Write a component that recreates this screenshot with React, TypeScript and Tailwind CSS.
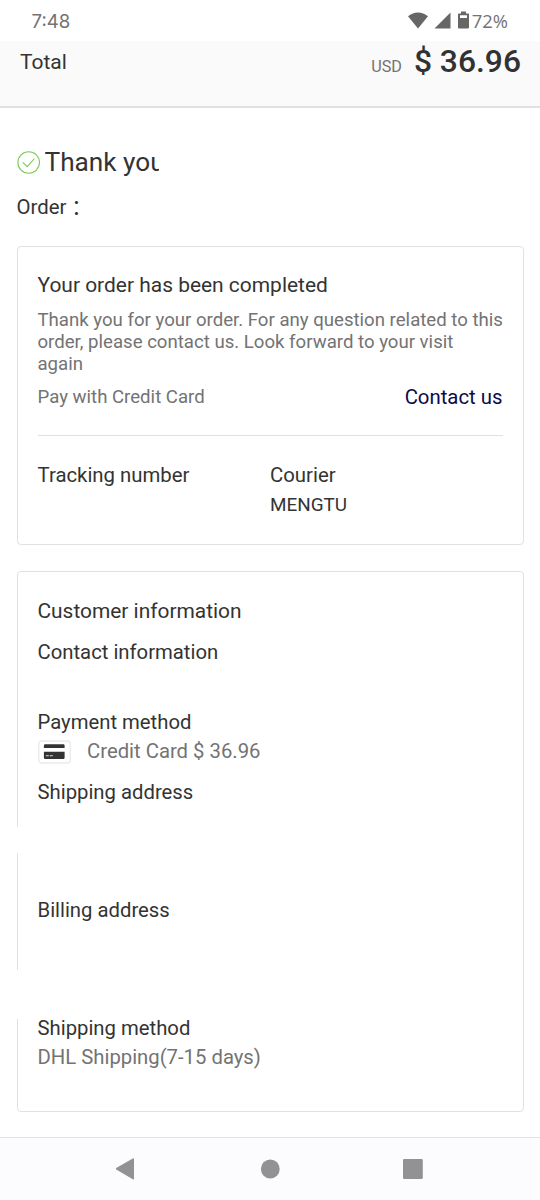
import React from 'react';

const StatusBar = () => {
  return (
    <div className="flex h-[41px] items-center justify-between bg-white pl-[31.5px] pr-8 text-[18px] text-[#737373]">
      <span className="mt-[2px] font-['Inter',sans-serif] text-[18.6px]">7:48</span>
      <div className="flex items-center">
        <svg className="h-[17px] w-5" viewBox="0 0 20 17" fill="#666666">
          <path d="M0 4.2C5.8-.9 14.2-.9 20 4.2L10 16.4Z" />
        </svg>
        <svg className="ml-[6px] h-[17px] w-[17px]" viewBox="0 0 17 17" fill="#666666">
          <path d="M16.5.5V16.5H.5Z" />
        </svg>
        <svg className="ml-[7px] h-[18px] w-[11px]" viewBox="0 0 11 18" fill="#666666">
          <path fillRule="evenodd" d="M3 .5H8V2.5H10Q11 2.5 11 3.5V16.5Q11 17.5 10 17.5H1Q0 17.5 0 16.5V3.5Q0 2.5 1 2.5H3ZM2 4.3V7H9V4.3Z" />
        </svg>
        <span className="ml-[3px] mt-px font-['Open_Sans',sans-serif] text-[18.4px]">72%</span>
      </div>
    </div>
  );
};

const TotalBar = () => {
  return (
    <div className="flex h-[67px] items-start justify-between border-b-2 border-[#e0e0e0] bg-[#fafafa] pl-5 pr-[19px]">
      <span className="mt-[6px] text-[21px] leading-[30px] text-[#333333]">Total</span>
      <div className="flex items-baseline">
        <span className="mr-3 text-[16.2px] text-[#737373]">USD</span>
        <span className="text-[31.8px] font-medium leading-[41px] text-[#323232]">$ 36.96</span>
      </div>
    </div>
  );
};

const OrderCard = () => {
  return (
    <div className="mt-[24px] h-[299px] rounded border border-[#e1e1e1] px-[20px] pt-[23px]">
      <h2 className="text-[20.95px] leading-[30px]">Your order has been completed</h2>
      <p className="mt-[9px] whitespace-nowrap text-[18.63px] leading-[22.2px] text-[#737373]">
        Thank you for your order. For any question related to this
        <br />
        order, please contact us. Look forward to your visit
        <br />
        again
      </p>
      <div className="mt-[6px] flex items-start justify-between border-b border-[#e1e1e1] pb-[23px] leading-[30px]">
        <span className="text-[18.63px] text-[#737373]">Pay with Credit Card</span>
        <span className="text-[20.35px] text-[#0b0b4a]">Contact us</span>
      </div>
      <div className="mt-[24px] grid grid-cols-2 leading-[30px]">
        <span className="text-[20.35px]">Tracking number</span>
        <div className="flex flex-col">
          <span className="text-[20.35px]">Courier</span>
          <span className="text-[18.9px]">MENGTU</span>
        </div>
      </div>
    </div>
  );
};

const CustomerCard = () => {
  return (
    <div className="relative mt-[26px] h-[541px] rounded border border-[#e1e1e1] px-[20px] pt-[24px] text-[20.3px] leading-[30px]">
      {/* breaks in the left border */}
      <div className="absolute -left-px top-[255px] h-[26px] w-px bg-white" />
      <div className="absolute -left-px top-[398px] h-[49px] w-px bg-white" />
      <h2 className="text-[20.9px]">Customer information</h2>
      <h3 className="mt-[11px]">Contact information</h3>
      <h3 className="mt-[40px]">Payment method</h3>
      <div className="-mt-px flex items-center text-[#737373]">
        <svg className="mr-4 mt-[2px] h-6 w-[33.5px]" viewBox="0 0 34 24">
          <rect x=".8" y=".8" width="32" height="22.4" rx="3" fill="#fff" stroke="#ebebeb" strokeWidth="1.4" />
          <path d="M7.3 4.2H25.7Q27 4.2 27 5.5V8H6V5.5Q6 4.2 7.3 4.2ZM6 11.8H27V17.8Q27 19 25.7 19H7.3Q6 19 6 17.8Z" fill="#333" />
          <path d="M8 15.8H11M12 15.8H15" stroke="#ddd" strokeWidth="1.1" />
        </svg>
        <span>Credit Card $ 36.96</span>
      </div>
      <h3 className="mt-[11px]">Shipping address</h3>
      <h3 className="mt-[88px]">Billing address</h3>
      <h3 className="mt-[88px]">Shipping method</h3>
      <p className="-mt-px text-[#737373]">DHL Shipping(7-15 days)</p>
    </div>
  );
};

const NavBar = () => {
  return (
    <div className="mt-[25px] h-[63px] border-t border-[#dce6e1] bg-[#fcfcfe]">
      <svg className="h-[62px] w-full" viewBox="0 0 540 62" fill="#929292">
        <path d="M116.2 30Q115.4 30.7 116.2 31.6L132.8 41.3Q134 41.8 134 40.7V21.1Q134 20 132.8 20.5Z" />
        <circle cx="270.3" cy="31" r="9.4" />
        <rect x="403" y="21" width="19.8" height="20" rx="1.3" />
      </svg>
    </div>
  );
};

const App = () => {
  return (
    <div className="h-[1200px] w-[540px] overflow-hidden bg-white font-['Roboto',sans-serif] text-[#333333]">
      <StatusBar />
      <TotalBar />
      <main className="px-[16.5px]">
        <div className="mt-[37px] flex h-[34px] items-center">
          <svg className="mr-[5px] h-6 w-[23px]" viewBox="0 0 23 24" fill="none" stroke="#7ccb58" strokeWidth="1.1">
            <circle cx="11.7" cy="12.5" r="10.8" />
            <path d="M5.8 12.3L10.2 16.7L17.5 8.5" />
          </svg>
          <h1 className="w-[114.5px] overflow-hidden whitespace-nowrap text-[26.2px] leading-[34px]">Thank you</h1>
        </div>
        <div className="mt-[13px] flex h-[30px] text-[20.35px] leading-[30px]">
          Order
          <span className="font-['Noto_Sans_CJK_JP',sans-serif]">{'\uFF1A'}</span>
        </div>
        <OrderCard />
        <CustomerCard />
      </main>
      <NavBar />
    </div>
  );
};

export default App;
